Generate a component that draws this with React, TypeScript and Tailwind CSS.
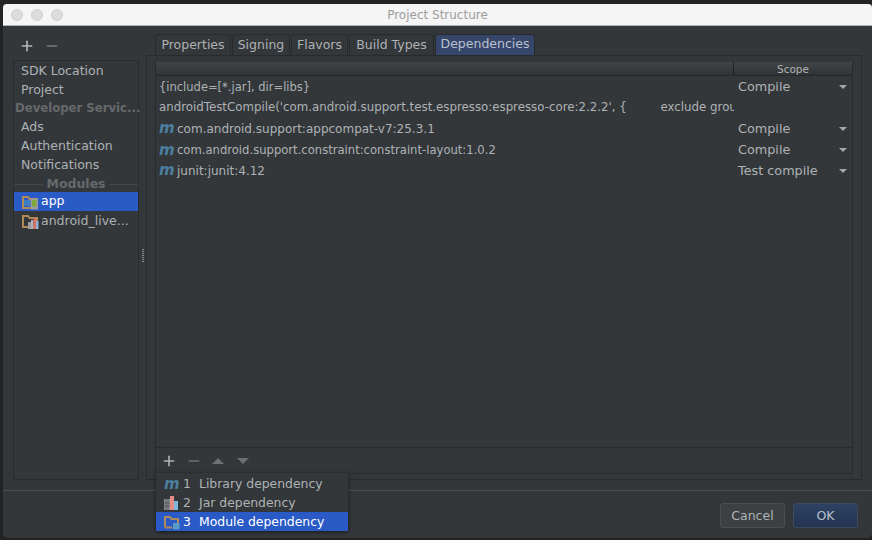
import { Minus, Plus } from "lucide-react";

const font = "font-['DejaVu_Sans',sans-serif]";

function MIcon() {
  return <span className="font-['DejaVu_Sans',sans-serif] text-[15px] leading-none font-bold text-[#4a7f9f] italic">m</span>;
}

function FolderOutline() {
  return <path d="M1 14V3h5l1.5 2H15v9z" fill="none" stroke="#b08a58" strokeWidth="2" />;
}

function AppIcon() {
  return (
    <svg width="17" height="16" viewBox="0 0 17 16" className="shrink-0">
      <FolderOutline />
      <rect x="2" y="6" width="6" height="6" fill="#3d7fc0" />
      <rect x="8.5" y="4.5" width="7.5" height="11" rx="1" fill="#9a9d9f" />
      <rect x="10" y="6" width="4.5" height="6.5" fill="#7fa83c" />
    </svg>
  );
}

function LiveIcon() {
  return (
    <svg width="17" height="16" viewBox="0 0 17 16" className="shrink-0">
      <FolderOutline />
      <rect x="6" y="9" width="3" height="7" fill="#9a9d9f" />
      <rect x="9" y="7" width="2.5" height="9" fill="#b0b2b4" />
      <rect x="11.5" y="5" width="2.5" height="11" fill="#d9706a" />
      <rect x="14" y="8" width="2.5" height="8" fill="#8fb6d0" />
    </svg>
  );
}

function JarIcon() {
  return (
    <svg width="15" height="14" viewBox="0 0 15 14">
      <rect x="0" y="3" width="6" height="11" fill="#8c8f91" />
      <path d="M2 3v11M4 3v11M0 7h6M0 10h6" stroke="#4a4d50" strokeWidth="0.7" />
      <rect x="6" y="0" width="4" height="14" fill="#e38b85" />
      <rect x="10" y="5" width="4" height="9" fill="#7db8dc" />
    </svg>
  );
}

function ModuleIcon() {
  return (
    <svg width="16" height="15" viewBox="0 0 16 15">
      <path d="M1 12.5V2h5l1.5 2H14v5M1 12.5h7" fill="none" stroke="#b08a58" strokeWidth="2" />
      <rect x="9" y="8" width="6.5" height="6.5" fill="#5a9ac8" />
    </svg>
  );
}

function Arrow() {
  return <span className="h-0 w-0 border-x-[4px] border-t-[4px] border-x-transparent border-t-[#a3a7aa]" />;
}

function SideItem({ label, className = "h-[19px]" }: { label: string; className?: string }) {
  return <div className={`flex items-center pl-[7px] ${className}`}>{label}</div>;
}

function Tab({ label, width, active }: { label: string; width: string; active?: boolean }) {
  return (
    <div
      className={`flex h-[21px] items-center justify-center rounded-t-[3px] border border-b-0 border-[#282b2e] ${width} ${
        active ? "bg-[#36466a] pb-[2px] text-[#b9c1cf]" : "bg-[#33373a] pt-px"
      }`}
    >
      {label}
    </div>
  );
}

function DepRow({ name, scope, lib, size = "text-[12px]" }: { name: string; scope?: string; lib?: boolean; size?: string }) {
  return (
    <div className="flex h-[21px] items-center">
      <div className={`flex h-[21px] w-[578px] items-center overflow-hidden pl-[3px] whitespace-pre ${size}`}>
        {lib && <span className="flex w-[18px] shrink-0"><MIcon /></span>}
        <span>{name}</span>
      </div>
      {scope && (
        <div className="flex flex-1 items-center justify-between pr-[5px] pl-[4px] text-[12.8px]">
          <span>{scope}</span>
          <Arrow />
        </div>
      )}
    </div>
  );
}

export default function App() {
  return (
    <div className={`h-[540px] w-[872px] overflow-hidden bg-[#232323] pt-[4px] pl-[3px] text-[12.5px] text-[#aeb2b5] ${font}`}>
      <div className="flex h-[534px] flex-col overflow-hidden rounded-b-[5px] bg-[#33373a]">
        {/* title bar */}
        <div className="relative flex h-[22px] shrink-0 items-center justify-center rounded-t-[4px] border-b border-[#b4b4b4] bg-[#f5f5f5] text-[12px] text-[#9d9d9d]">
          <div className="absolute top-[5px] left-[8px] flex gap-[8px]">
            <span className="h-[12px] w-[12px] rounded-full border border-[#cfcfcf] bg-[#dcdcdc]" />
            <span className="h-[12px] w-[12px] rounded-full border border-[#cfcfcf] bg-[#dcdcdc]" />
            <span className="h-[12px] w-[12px] rounded-full border border-[#cfcfcf] bg-[#dcdcdc]" />
          </div>
          Project Structure
        </div>

        {/* main */}
        <div className="flex h-[465px] shrink-0 border-b border-[#4a4c4e] pt-[8px]">
          <div className="ml-[10px] flex w-[126px] shrink-0 flex-col">
            <div className="flex h-[26px] shrink-0 items-center gap-[9px] pb-[2px] pl-[6px] text-[#b5b8ba]">
              <Plus size={16} strokeWidth={2.4} />
              <Minus size={16} strokeWidth={2.4} className="text-[#77797b]" />
            </div>
            <div className="mb-[10px] flex-1 border border-[#282b2e]">
              <SideItem label="SDK Location" className="h-[20px] pt-px" />
              <SideItem label="Project" />
              <div className="flex h-[18px] items-center pl-[1px] text-[11.7px] font-bold whitespace-nowrap text-[#66696b]">Developer Servic...</div>
              <SideItem label="Ads" />
              <SideItem label="Authentication" />
              <SideItem label="Notifications" />
              <div className="mb-[-2px] flex h-[19px] items-center gap-[3px] font-bold text-[#66696b]">
                <span className="h-px flex-1 bg-[#45484a]" />
                Modules
                <span className="h-px flex-1 bg-[#45484a]" />
              </div>
              <div className="flex h-[19px] items-center gap-[2px] bg-[#2a5ac6] pl-[8px] text-white">
                <AppIcon />
                app
              </div>
              <div className="flex h-[19px] items-center gap-[2px] pt-px pl-[8px]">
                <LiveIcon />
                android_live...
              </div>
            </div>
          </div>

          {/* splitter */}
          <div className="flex w-[7px] shrink-0 flex-col items-center justify-center gap-[1px] pb-[14px]">
            {[0, 1, 2, 3, 4, 5, 6].map((i) => (
              <span key={i} className="h-px w-[2px] bg-[#8a8c8e]" />
            ))}
          </div>

          <div className="flex w-[716px] shrink-0 flex-col">
            <div className="ml-[9px] flex h-[21px] shrink-0 gap-px">
              <Tab label="Properties" width="w-[76px]" />
              <Tab label="Signing" width="w-[58px]" />
              <Tab label="Flavors" width="w-[57px]" />
              <Tab label="Build Types" width="w-[85px]" />
              <Tab label="Dependencies" width="w-[100px]" active />
            </div>
            <div className="relative mb-[10px] flex-1 border border-[#282b2e] px-[8px] pt-[6px] pb-[5px]">
              <div className="flex h-full flex-col border border-[#282b2e] border-t-0">
                <div className="flex h-[14px] shrink-0 border-b border-[#26292c] bg-gradient-to-b from-[#414548] to-[#2f3336] text-[10.5px] leading-[14px]">
                  <div className="w-[578px] border-r border-[#222528]" />
                  <div className="flex-1 text-center">Scope</div>
                </div>
                <div className="flex-1">
                  <DepRow size="pt-[2px] text-[11.5px]" name="{include=[*.jar], dir=libs}" scope="Compile" />
                  <DepRow size="text-[11.8px]" name="androidTestCompile('com.android.support.test.espresso:espresso-core:2.2.2', {         exclude group" />
                  <DepRow name="com.android.support:appcompat-v7:25.3.1" scope="Compile" lib />
                  <DepRow size="pt-[2px] text-[11.6px]" name="com.android.support.constraint:constraint-layout:1.0.2" scope="Compile" lib />
                  <DepRow name="junit:junit:4.12" scope="Test compile" lib />
                </div>
                <div className="flex h-[26px] shrink-0 items-center gap-[9px] border-t border-[#282b2e] pl-[5px]">
                  <Plus size={16} strokeWidth={2.4} />
                  <Minus size={16} strokeWidth={2.4} className="text-[#6d7073]" />
                  <span className="ml-[1px] h-0 w-0 border-x-[6px] border-b-[6px] border-x-transparent border-b-[#6d7073]" />
                  <span className="ml-[4px] h-0 w-0 border-x-[6px] border-t-[6px] border-x-transparent border-t-[#6d7073]" />
                </div>
              </div>

              {/* add dependency popup */}
              <div className="absolute top-[417px] left-[9px] w-[192px] bg-[#33373a] pt-px shadow-[0_1px_4px_rgba(0,0,0,0.6)]">
                <div className="flex h-[19px] items-center pt-px pl-[8px] text-[12.4px]">
                  <span className="flex w-[19px]"><MIcon /></span>
                  <span className="w-[16px]">1</span>Library dependency
                </div>
                <div className="flex h-[19px] items-center pt-px pl-[8px] text-[12.4px]">
                  <span className="flex w-[19px]"><JarIcon /></span>
                  <span className="w-[16px]">2</span>Jar dependency
                </div>
                <div className="flex h-[19px] items-center bg-[#2a5ac6] pt-px pl-[8px] text-[12.4px] text-white">
                  <span className="flex w-[19px]"><ModuleIcon /></span>
                  <span className="w-[16px]">3</span>Module dependency
                </div>
              </div>
            </div>
          </div>
        </div>

        {/* footer */}
        <div className="flex flex-1 items-start justify-end gap-[8px] pt-[12px] pr-[14px]">
          <button className="h-[25px] w-[65px] rounded-[3px] border border-[#4b4e50] bg-[#3c4043] pt-px text-[#aeb2b5]">Cancel</button>
          <button className="h-[25px] w-[65px] rounded-[3px] border border-[#3c4a5e] bg-gradient-to-b from-[#2d4263] to-[#223450] pt-px text-[#b9c1cf]">OK</button>
        </div>
      </div>
    </div>
  );
}
